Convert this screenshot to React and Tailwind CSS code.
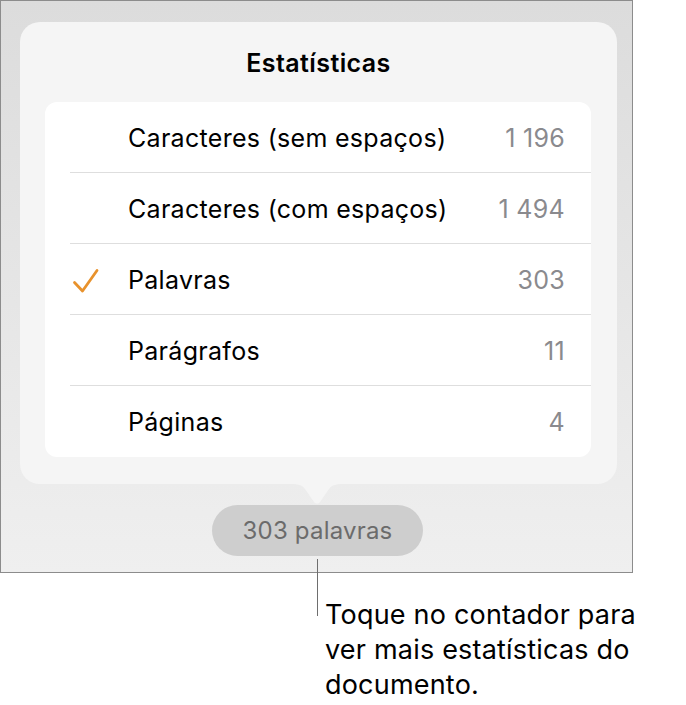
import React from "react";

const rows = [
  { label: "Caracteres (sem espaços)", value: "1 196" },
  { label: "Caracteres (com espaços)", value: "1 494" },
  { label: "Palavras", value: "303", checked: true },
  { label: "Parágrafos", value: "11" },
  { label: "Páginas", value: "4" },
];

function Check() {
  return (
    <svg width="28" height="26" viewBox="0 0 28 26" className="block">
      <path
        d="M2.5 14.5 L10.5 23 L25 2.5"
        fill="none"
        stroke="#e8922c"
        strokeWidth="2.8"
        strokeLinecap="round"
        strokeLinejoin="round"
      />
    </svg>
  );
}

export default function App() {
  const font = { fontFamily: "Inter, 'Noto Sans', sans-serif" };

  return (
    <div className="w-[686px] h-[705px] bg-white relative" style={font}>
      <div className="w-[633px] h-[573px] border border-[#8c8c8c] bg-gradient-to-b from-[#dcdcdc] to-[#efefef] pt-[21px] pl-[19px] flex flex-col">
        {/* popover */}
        <div className="relative w-[597px] h-[462px] rounded-[20px] bg-[#f5f5f5] flex flex-col items-center">
          <h2 className="mt-[26px] text-[25px] leading-[30px] font-semibold text-black tracking-[0.4px]">
            Estatísticas
          </h2>
          <div className="mt-[24px] ml-[-1px] w-[546px] rounded-[12px] bg-white flex flex-col">
            {rows.map((r, i) => (
              <div key={r.label} className="h-[71px] flex items-stretch">
                <div className="w-[25px] shrink-0" />
                <div
                  className={
                    i < rows.length - 1
                      ? "flex-1 flex items-center pt-[3px] border-b border-[#dedede]"
                      : "flex-1 flex items-center pt-[3px]"
                  }
                >
                  <div className="w-[58px] shrink-0 flex items-center pl-[2px]">
                    {r.checked && <Check />}
                  </div>
                  <span className="flex-1 text-[25px] tracking-[0.3px] text-black">{r.label}</span>
                  <span className="text-[25px] tracking-[0.3px] text-[#8a8a8e] pr-[26px]">{r.value}</span>
                </div>
              </div>
            ))}
          </div>
          {/* pointer */}
          <svg
            width="60"
            height="22"
            viewBox="0 0 60 22"
            className="absolute left-[267px] top-[461px]"
          >
            <path
              d="M0 1 C10 1 14 1 18 6 L27 19 C28.5 21 31.5 21 33 19 L42 6 C46 1 50 1 60 1 L60 0 L0 0 Z"
              fill="#f5f5f5"
            />
          </svg>
        </div>
        {/* counter button */}
        <div className="mt-[21px] ml-[192px] w-[211px] h-[51px] rounded-full bg-[#cecece] flex items-center justify-center">
          <span className="text-[24px] text-[#6b6b6b] tracking-[0.2px]">303 palavras</span>
        </div>
      </div>
      {/* callout */}
      <div className="flex">
        <div className="ml-[317px] mt-[-14px] w-px h-[57px] bg-[#6e6e6e]" />
        <p className="ml-[7px] mt-[24px] text-[27px] leading-[35px] tracking-[0.2px] text-black">
          Toque no contador para
          <br />
          ver mais estatísticas do
          <br />
          documento.
        </p>
      </div>
    </div>
  );
}
